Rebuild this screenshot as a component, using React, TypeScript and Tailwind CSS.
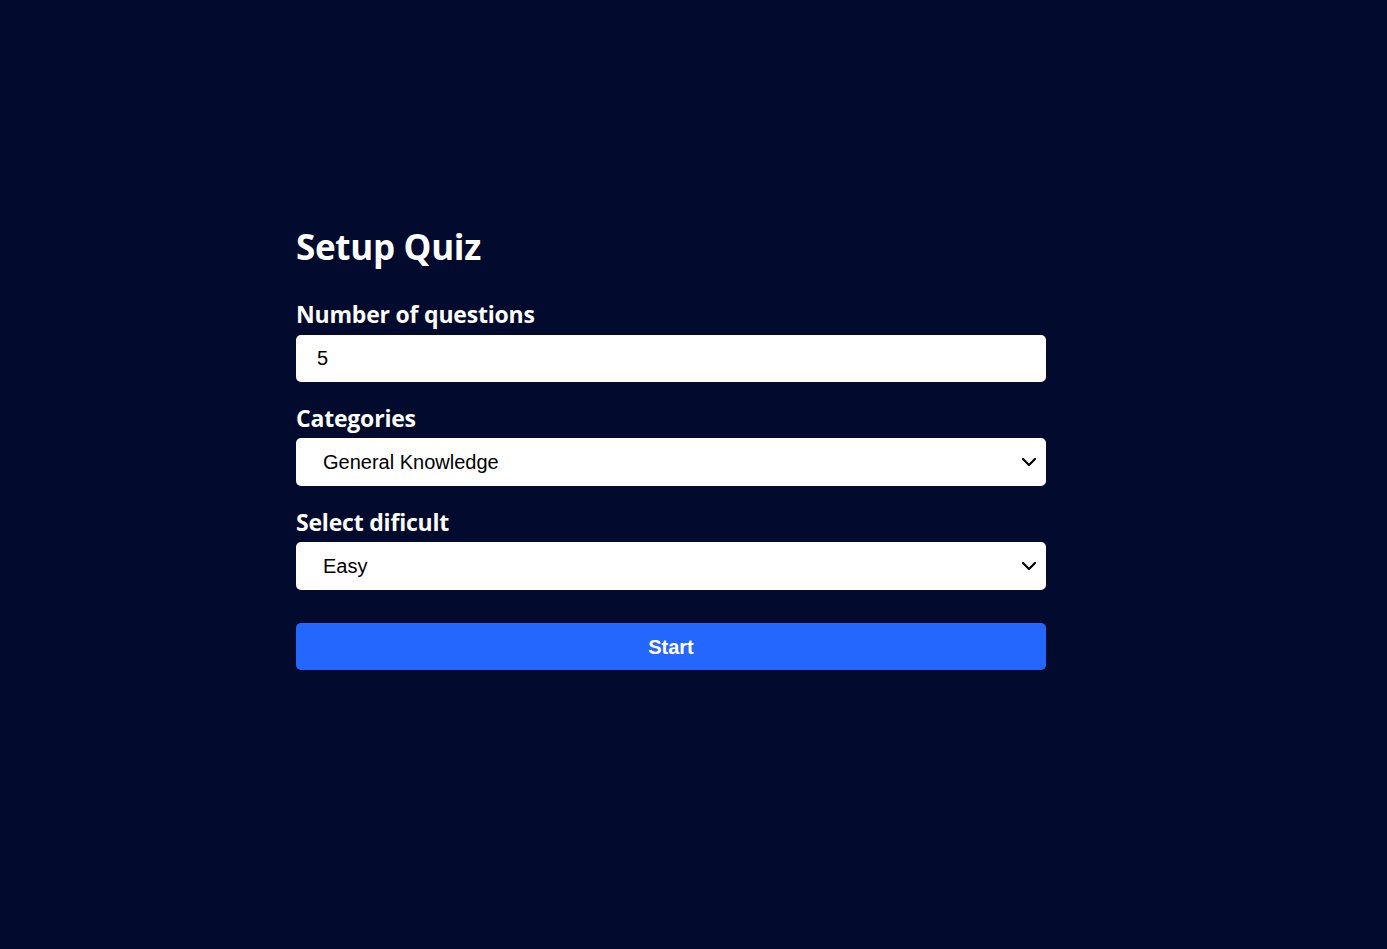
import { ChevronDown } from "lucide-react"

const categories = ["General Knowledge", "Sports", "History", "Politics"]
const levels = ["Easy", "Medium", "Hard"]

export default function App() {
  return (
    <div className="min-h-screen w-full bg-[#020a2e] font-['Open_Sans','Lato',sans-serif]">
      <div className="pl-[296px] pt-[222px]">
        <form className="w-[750px] flex flex-col" onSubmit={(e) => e.preventDefault()}>
          <h1 className="text-[35px] font-bold text-white leading-[50px] mb-[27px] tracking-[-0.3px]">Setup Quiz</h1>

          <label className="text-[23px] font-bold text-white leading-[30px] mb-[6px] tracking-[-0.2px]">Number of questions</label>
          <input
            type="number"
            defaultValue={5}
            className="h-[47px] rounded-[5px] bg-white pl-[21px] pr-5 text-[20px] text-black font-['Liberation_Sans',Arial,sans-serif] outline-none"
          />

          <label className="text-[23px] font-bold text-white leading-[30px] mt-[21px] mb-[5px] tracking-[-0.2px]">Categories</label>
          <div className="relative">
            <select className="w-full h-[48px] appearance-none rounded-[5px] bg-white pl-[27px] text-[20px] text-black font-['Liberation_Sans',Arial,sans-serif] outline-none">
              {categories.map((c) => (
                <option key={c}>{c}</option>
              ))}
            </select>
            <ChevronDown className="absolute right-[5px] top-1/2 -translate-y-1/2 w-[24px] h-[24px] text-black pointer-events-none" strokeWidth={2.2} />
          </div>

          <label className="text-[23px] font-bold text-white leading-[30px] mt-[21px] mb-[5px] tracking-[-0.2px]">Select dificult</label>
          <div className="relative">
            <select className="w-full h-[48px] appearance-none rounded-[5px] bg-white pl-[27px] text-[20px] text-black font-['Liberation_Sans',Arial,sans-serif] outline-none">
              {levels.map((l) => (
                <option key={l}>{l}</option>
              ))}
            </select>
            <ChevronDown className="absolute right-[5px] top-1/2 -translate-y-1/2 w-[24px] h-[24px] text-black pointer-events-none" strokeWidth={2.2} />
          </div>

          <button className="mt-[33px] h-[47px] rounded-[5px] bg-[#2467ff] text-white text-[20px] font-bold font-['Liberation_Sans',Arial,sans-serif]">
            Start
          </button>
        </form>
      </div>
    </div>
  )
}
